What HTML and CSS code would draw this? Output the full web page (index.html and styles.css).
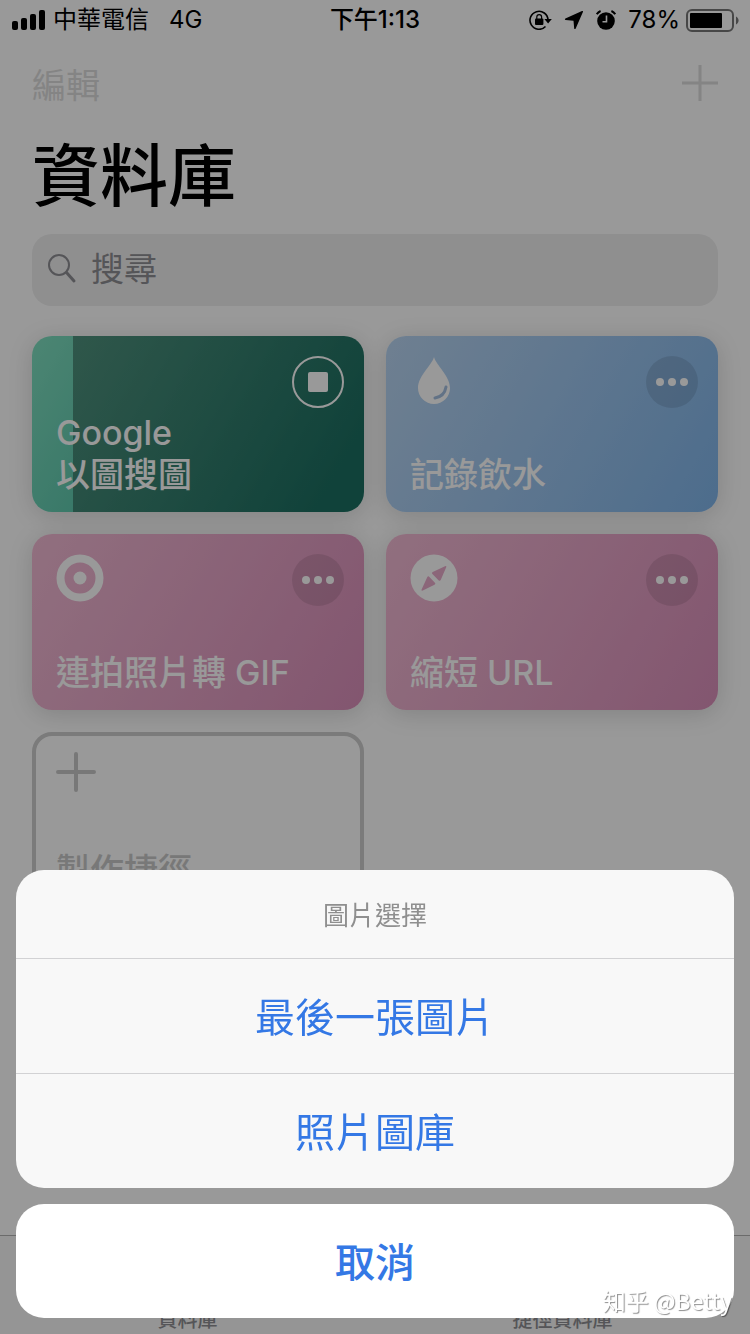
FILE: index.html
```html
<!DOCTYPE html>
<html lang="zh-Hant">
<head>
  <meta charset="UTF-8">
  <meta name="viewport" content="width=device-width, initial-scale=1">
  <title>捷徑</title>
  <link rel="stylesheet" href="styles.css">
</head>
<body>

  <div class="app">
    <div class="status-bar">
      <div class="status-left">
        <svg width="34" height="20" viewBox="0 0 34 20">
          <rect x="1" y="11" width="6" height="9" rx="2"/>
          <rect x="10" y="8" width="6" height="12" rx="2"/>
          <rect x="19" y="4" width="6" height="16" rx="2"/>
          <rect x="28" y="0" width="6" height="20" rx="2"/>
        </svg>
        <span>中華電信</span>
        <span class="network">4G</span>
      </div>
      <div class="status-time">下午1:13</div>
      <div class="status-right">
        <!-- rotation lock -->
        <svg width="23" height="20" viewBox="0 0 23 20">
          <path d="M16.5 16.5A9 9 0 1 1 19 10" fill="none" stroke="#000" stroke-width="1.6"/>
          <path d="M15.4 9h7.4l-3.7 4.6z"/>
          <rect x="6" y="8.6" width="8.4" height="6.4" rx="1"/>
          <path d="M7.800 9V7a2.400 2.400 0 0 1 4.800 0V9" fill="none" stroke="#000" stroke-width="1.200"/>
        </svg>
        <!-- location -->
        <svg width="20" height="20" viewBox="0 0 20 20">
          <path d="M18 1.100c.9-.3 1.200.2.900.9l-7.200 16.600c-.4.800-1.400.6-1.500-.2L9.500 10.800 1.600 10c-.9-.1-1-1.100-.2-1.500z"/>
        </svg>
        <!-- alarm -->
        <svg width="20" height="20" viewBox="0 0 20 20">
          <circle cx="10" cy="11" r="8.8"/>
          <path d="M.8 4.200A8 8 0 0 1 4.600 1M19.200 4.200A8 8 0 0 0 15.400 1" fill="none" stroke="#000" stroke-width="2"/>
          <path d="M10.500 5.500v6.300H6.500" fill="none" stroke="#fff" stroke-width="1.600"/>
        </svg>
        <span>78%</span>
        <!-- battery -->
        <svg class="battery" width="53" height="23" viewBox="0 0 53 23">
          <rect x="1" y="1" width="46" height="21" rx="5" fill="none" stroke="#777" stroke-width="2"/>
          <rect x="4" y="4" width="32" height="15" rx="1"/>
          <path d="M50 7.500c3.400 1.500 3.400 6.500 0 8z" fill="#777"/>
        </svg>
      </div>
    </div>

    <header class="nav">
      <button class="nav-btn" type="button">編輯</button>
      <button class="nav-btn" type="button" aria-label="新增">
        <svg width="36" height="36" viewBox="0 0 36 36">
          <path d="M18 0v36M0 18h36" stroke="#dcdcdc" stroke-width="3"/>
        </svg>
      </button>
    </header>

    <h1>資料庫</h1>

    <label class="search">
      <svg width="30" height="30" viewBox="0 0 30 30">
        <circle cx="12" cy="11" r="10" fill="none" stroke="#8e8e93" stroke-width="2"/>
        <path d="M19.500 18.500L27 27" stroke="#8e8e93" stroke-width="3" stroke-linecap="round"/>
      </svg>
      <input type="search" placeholder="搜尋" aria-label="搜尋">
    </label>

    <main class="grid">
      <div class="card green" style="--progress: 12.35%">
        <div class="card-top">
          <span></span>
          <button class="stop" type="button" aria-label="停止"><span></span></button>
        </div>
        <div class="card-name">Google<br>以圖搜圖</div>
      </div>

      <div class="card blue">
        <div class="card-top">
          <svg width="48" height="48" viewBox="0 0 48 48">
            <path d="M24 1c2 8 16 19 16 31a16 16 0 0 1-32 0C8 20 22 9 24 1z" fill="#fff"/>
            <path d="M36 31c-1 6-5 10-11 11" fill="none" stroke="#a3bfdf" stroke-width="3" stroke-linecap="round"/>
          </svg>
          <button class="more" type="button" aria-label="更多"><i></i><i></i><i></i></button>
        </div>
        <div class="card-name">記錄飲水</div>
      </div>

      <div class="card pink">
        <div class="card-top">
          <svg width="48" height="48" viewBox="0 0 48 48">
            <circle cx="24" cy="24" r="19.500" fill="none" stroke="#fff" stroke-width="8"/>
            <circle cx="24" cy="24" r="6.500" fill="#fff"/>
          </svg>
          <button class="more" type="button" aria-label="更多"><i></i><i></i><i></i></button>
        </div>
        <div class="card-name">連拍照片轉 GIF</div>
      </div>

      <div class="card pink">
        <div class="card-top">
          <svg width="48" height="48" viewBox="0 0 48 48">
            <circle cx="24" cy="24" r="23.500" fill="#fff"/>
            <g fill="#e8aaca">
              <path d="M35 12.200q1.800-.6 1.200 1l-5.400 12.600q-.9 1.700-2.300.4L22.400 20q-1.200-1.200.3-2z"/>
              <path d="M12.800 36.500q-1.800.6-1.200-1l5.600-12.200q.9-1.700 2.200-.4l5.500 5.800q1.200 1.200-.4 2.100z"/>
            </g>
          </svg>
          <button class="more" type="button" aria-label="更多"><i></i><i></i><i></i></button>
        </div>
        <div class="card-name">縮短 URL</div>
      </div>

      <div class="card create">
        <svg width="40" height="40" viewBox="0 0 40 40">
          <path d="M20 2v36M2 20h36" stroke="#c9c9c9" stroke-width="4" stroke-linecap="round"/>
        </svg>
        <div class="card-name">製作捷徑</div>
      </div>
    </main>
  </div>

  <nav class="tabs">
    <a href="#library">資料庫</a>
    <a href="#gallery">捷徑資料庫</a>
  </nav>

  <div class="dim"></div>

  <div class="sheet" role="dialog" aria-labelledby="sheetTitle">
    <div class="sheet-group">
      <div class="sheet-title" id="sheetTitle">圖片選擇</div>
      <button type="button">最後一張圖片</button>
      <button type="button">照片圖庫</button>
    </div>
    <button class="cancel" type="button">取消</button>
  </div>

  <div class="watermark">知乎 @Betty</div>

</body>
</html>
```

FILE: styles.css
```css
:root {
  --blue: #3478e5;
  --gray: #8e8e93;
  --side: 32px;
}

* { box-sizing: border-box; }

body {
  margin: 0;
  background: #fff;
  color: #000;
  font-family: Inter, "Noto Sans CJK TC", sans-serif;
}

button {
  border: none;
  padding: 0;
  background: none;
  font-family: inherit;
  cursor: pointer;
}

svg {
  display: block;
  flex: none;
}

/* status bar */
.status-bar {
  display: grid;
  grid-template-columns: 1fr auto 1fr;
  align-items: center;
  height: 40px;
  padding: 0 11px;
  font-size: 24px;
  line-height: 40px;
}

.status-left,
.status-right {
  display: flex;
  align-items: center;
  gap: 8px;
}

.status-right {
  justify-content: flex-end;
  gap: 12px;
}

.network { margin-left: 12px; }

.status-time { font-weight: 500; }

.battery { margin-left: -6px; }

/* header */
.nav {
  display: flex;
  justify-content: space-between;
  align-items: center;
  height: 86px;
  padding: 0 var(--side);
}

.nav-btn {
  color: #dcdcdc;
  font-size: 34px;
}

h1 {
  margin: 0;
  padding: 0 var(--side);
  font-size: 68px;
  font-weight: 500;
  line-height: 100px;
}

.search {
  display: flex;
  align-items: center;
  gap: 14px;
  height: 72px;
  margin: 8px var(--side) 30px;
  padding: 0 15px 2px;
  border-radius: 20px;
  background: #eeeeef;
}

.search input {
  flex: 1;
  min-width: 0;
  padding: 0;
  border: none;
  outline: none;
  background: none;
  font-family: inherit;
  font-size: 33px;
}

.search input::placeholder { color: var(--gray); }

/* shortcuts */
.grid {
  display: grid;
  grid-template-columns: 1fr 1fr;
  gap: 22px;
  padding: 0 var(--side) 120px;
}

.card {
  display: flex;
  flex-direction: column;
  justify-content: space-between;
  height: 176px;
  padding: 20px 20px 16px 24px;
  border-radius: 20px;
  color: #fff;
  box-shadow: 0 4px 24px rgba(0, 0, 0, 0.15);
}

.card-top {
  display: flex;
  justify-content: space-between;
  height: 48px;
}

.card-name {
  font-size: 34px;
  font-weight: 500;
  line-height: 42px;
}

.green {
  background:
    linear-gradient(to right, transparent var(--progress), rgba(0, 0, 0, 0.33) var(--progress)),
    linear-gradient(120deg, #80dfc0, #28a490 90%);
}

.blue { background: linear-gradient(120deg, #b9d5f2, #80b5ea); }

.pink { background: linear-gradient(120deg, #f2bad4, #da8fba); }

.create {
  padding: 16px 16px 12px 20px;
  border: 4px solid #cdcdcd;
  color: #c9c9c9;
  box-shadow: none;
}

.more {
  display: flex;
  justify-content: center;
  align-items: center;
  gap: 4px;
  width: 52px;
  height: 52px;
  border-radius: 50%;
  background: rgba(0, 0, 0, 0.1);
}

.more i {
  width: 8px;
  height: 8px;
  border-radius: 50%;
  background: #fff;
}

.stop {
  display: flex;
  justify-content: center;
  align-items: center;
  width: 52px;
  height: 52px;
  border: 2px solid #fff;
  border-radius: 50%;
}

.stop span {
  width: 20px;
  height: 20px;
  border-radius: 2px;
  background: #fff;
}

/* tab bar */
.tabs {
  position: fixed;
  right: 0;
  bottom: 0;
  left: 0;
  display: flex;
  align-items: flex-end;
  height: 99px;
  border-top: 1px solid #b2b2b2;
  background: #f9f9f9;
}

.tabs a {
  flex: 1;
  color: var(--gray);
  font-size: 20px;
  font-weight: 500;
  line-height: 28px;
  text-align: center;
  text-decoration: none;
}

.dim {
  position: fixed;
  inset: 0;
  background: rgba(0, 0, 0, 0.4);
}

/* action sheet */
.sheet {
  position: fixed;
  right: 16px;
  bottom: 16px;
  left: 16px;
  display: flex;
  flex-direction: column;
  gap: 16px;
}

.sheet-group {
  overflow: hidden;
  border-radius: 28px;
  background: #f8f8f8;
}

.sheet-title {
  padding-top: 4px;
  color: #8f8f8f;
  font-size: 26px;
  line-height: 84px;
  text-align: center;
}

.sheet button {
  display: block;
  width: 100%;
  height: 115px;
  padding-bottom: 2px;
  color: var(--blue);
  font-size: 40px;
}

.sheet-group button { border-top: 1px solid #d2d2d4; }

.sheet .cancel {
  height: 114px;
  border-radius: 28px;
  background: #fff;
  font-weight: 500;
}

.watermark {
  position: fixed;
  right: 18px;
  bottom: 16px;
  color: #fff;
  font-family: "Noto Sans CJK TC", sans-serif;
  font-size: 23px;
  line-height: 36px;
  text-shadow: 1px 1px 1px rgba(0, 0, 0, 0.45);
}
```
